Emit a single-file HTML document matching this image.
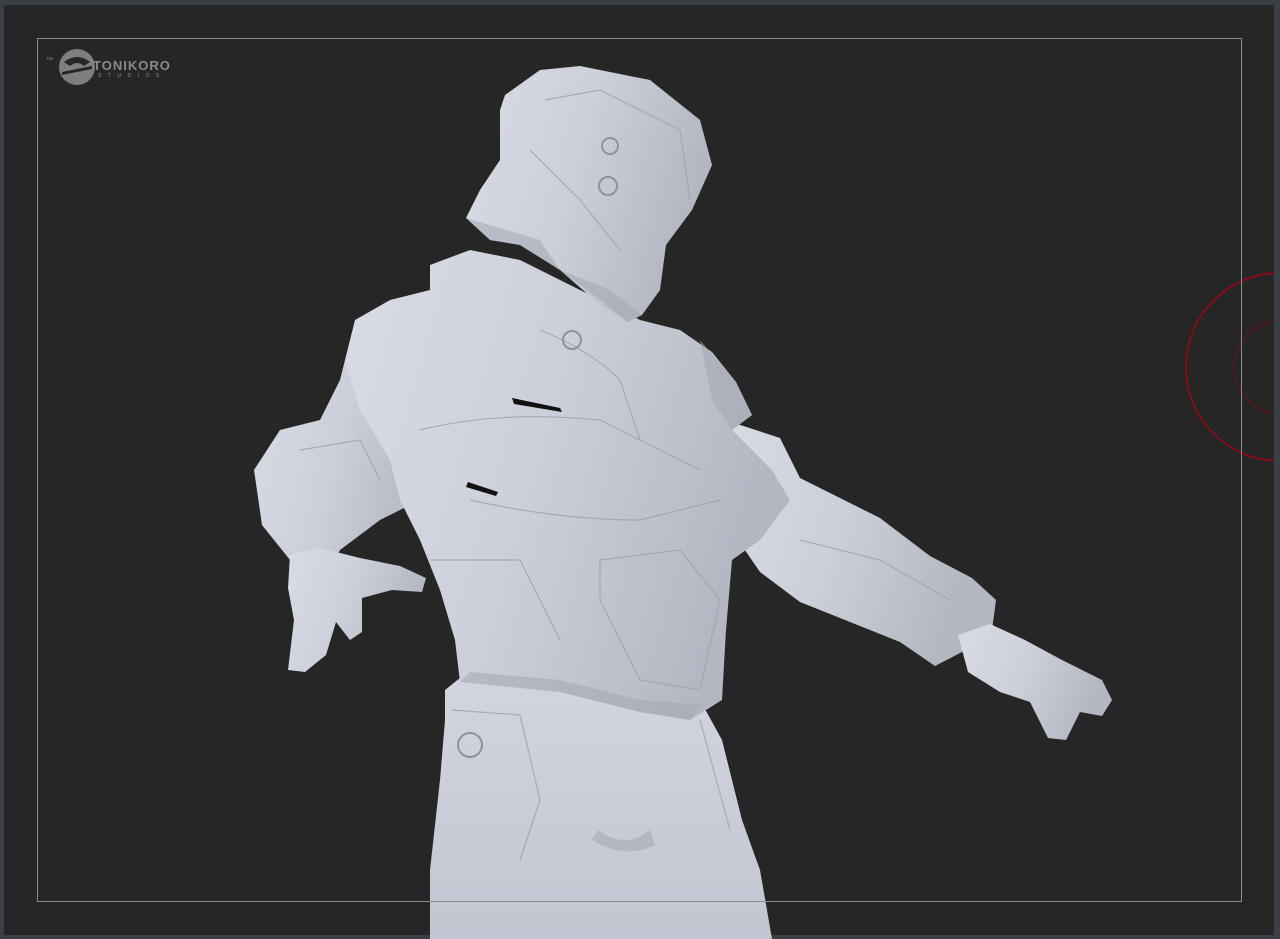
<!DOCTYPE html>
<html><head><meta charset="utf-8"><style>
html,body{margin:0;padding:0;background:#3a3f45;}
#c{position:relative;width:1280px;height:939px;overflow:hidden;background:#3a3f45;}
#vp{position:absolute;left:4px;top:5px;width:1270px;height:930px;background:#262626;overflow:hidden;}
svg{position:absolute;left:0;top:0;}
.t{font-family:"Liberation Sans",sans-serif;fill:#8a8a8a;}
</style></head><body><div id="c"><div id="vp"></div>
<svg width="1280" height="939" viewBox="0 0 1280 939">
<defs>
<linearGradient id="g" x1="0" y1="0" x2="1" y2="0.3">
<stop offset="0" stop-color="#d9dce5"/><stop offset="0.5" stop-color="#ccd0da"/><stop offset="1" stop-color="#b3b7c2"/>
</linearGradient>
<linearGradient id="gl" x1="0" y1="0" x2="0" y2="1">
<stop offset="0" stop-color="#d2d5df"/><stop offset="1" stop-color="#c2c6d1"/>
</linearGradient>
<clipPath id="vpc"><rect x="4" y="5" width="1270" height="930"/></clipPath>
</defs>
<!-- logo -->
<text x="46" y="62" class="t" font-size="7">™</text>
<circle cx="77" cy="67" r="18" fill="#7e7e7e"/>
<path d="M64 62 Q77 52 90 62 L84 66 Q77 60 70 66Z" fill="#262626"/>
<path d="M62 72 L92 66 L92 69 L62 75Z" fill="#262626"/>
<text x="93" y="70" class="t" font-size="13" font-weight="bold" letter-spacing="1" fill="#8a8a8a">TONIKORO</text>
<text x="98" y="77" class="t" font-size="5" letter-spacing="6.5">STUDIOS</text>
<!-- red circles -->
<g clip-path="url(#vpc)" fill="none">
<circle cx="1280" cy="367" r="94" stroke="#b00010" stroke-width="1.3"/>
<circle cx="1280" cy="367" r="46" stroke="#6a1418" stroke-width="1.3"/>
</g>
<!-- figure -->
<g fill="url(#g)" stroke="none">
<path d="M445 690 L460 678 L700 700 L722 740 L742 820 L760 870 L772 939 L430 939 L430 870 L440 780 L445 720Z" fill="url(#gl)"/>
<path d="M345 360 L380 370 L420 400 L440 440 L420 500 L380 520 L340 550 L320 590 L290 560 L262 525 L254 470 L280 430 L320 420 L340 380Z"/>
<path d="M290 555 L320 548 L360 558 L400 566 L426 578 L422 592 L392 590 L362 598 L362 632 L350 640 L336 622 L326 655 L305 672 L288 670 L294 620 L288 588Z"/>
<path d="M725 420 L780 438 L800 478 L840 498 L880 518 L930 556 L972 578 L996 600 L992 630 L962 652 L935 666 L900 642 L850 622 L800 602 L760 572 L738 540 L718 500Z"/>
<path d="M958 635 L990 624 L1025 640 L1062 660 L1102 680 L1112 700 L1102 716 L1080 712 L1066 740 L1048 738 L1030 702 L1000 692 L968 672Z"/>
<path d="M430 265 L470 250 L520 260 L560 280 L600 300 L640 320 L680 330 L712 352 L736 382 L752 415 L732 430 L772 470 L790 500 L760 540 L732 560 L726 630 L722 700 L690 720 L640 712 L560 692 L460 682 L455 640 L440 590 L420 540 L400 500 L390 460 L360 410 L345 360 L355 320 L390 300 L430 290Z"/>
<path d="M505 95 L540 70 L580 66 L650 80 L700 120 L712 165 L692 210 L666 245 L660 290 L642 315 L628 322 L600 305 L560 270 L520 245 L490 240 L466 218 L480 190 L500 160 L500 110Z"/>
</g>
<!-- shading -->
<g fill="#a3a7b2" opacity="0.55">
<path d="M460 682 L560 692 L640 712 L690 720 L700 705 L640 700 L560 680 L470 672Z"/>
<path d="M592 840 Q625 860 655 845 L650 830 Q625 850 598 830Z"/>
<path d="M700 340 L736 382 L752 415 L732 430 L712 400Z"/>
<path d="M466 218 L490 240 L520 245 L560 270 L540 240 L500 228Z"/>
<path d="M560 270 L600 300 L628 322 L642 315 L610 290Z"/>
</g>
<g fill="#111">
<path d="M512 398 L560 408 L562 412 L514 404Z"/>
<path d="M468 482 L498 492 L496 496 L466 487Z"/>
</g>
<g fill="none" stroke="#9ea2ad" stroke-width="1.2" opacity="0.8">
<path d="M540 330 Q590 350 620 380 L640 440"/>
<path d="M420 430 Q500 410 600 420 L700 470"/>
<path d="M470 500 Q560 520 640 520 L720 500"/>
<path d="M600 560 L680 550 L720 600 L700 690 L640 680 L600 600Z"/>
<path d="M430 560 L520 560 L560 640"/>
<path d="M545 100 L600 90 L680 130 L690 200"/>
<path d="M530 150 L580 200 L620 250"/>
<path d="M300 450 L360 440 L380 480"/>
<path d="M800 540 L880 560 L950 600"/>
<path d="M452 710 L520 715 L540 800 L520 860"/>
<path d="M700 720 L730 830"/>
</g>
<g fill="none" stroke="#8e929d" stroke-width="2">
<circle cx="470" cy="745" r="12"/>
<circle cx="610" cy="146" r="8"/>
<circle cx="608" cy="186" r="9"/>
<circle cx="572" cy="340" r="9"/>
</g>
<rect x="37.5" y="38.5" width="1204" height="863" fill="none" stroke="#8c8c8c" stroke-width="1"/>
</svg></div></body></html>
